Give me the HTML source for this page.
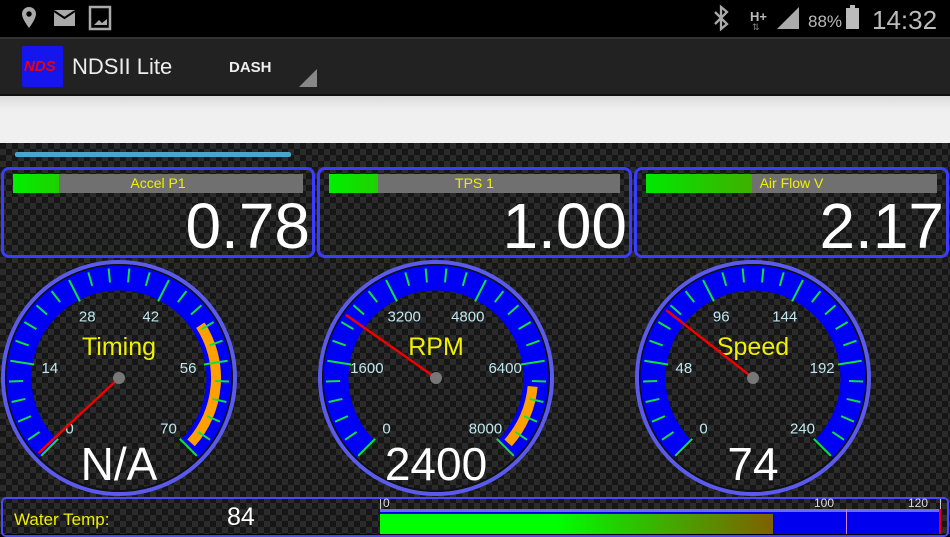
<!DOCTYPE html>
<html><head><meta charset="utf-8"><style>
*{margin:0;padding:0;box-sizing:border-box}
body{width:950px;height:534px;overflow:hidden;background:#000;font-family:"Liberation Sans",sans-serif;position:relative}
.abs{position:absolute}
#content{left:0;top:143px;width:950px;height:391px;background-color:#1c1c1c;
background-image:repeating-conic-gradient(#2b2b2b 0 25%,#161616 0 50%);background-size:12px 12px}
.box{border:3px solid #3c3cff;border-radius:8px;height:91px;top:167px}
.bar{position:absolute;left:9px;right:9px;top:4px;height:19px;background:#707070;color:#f0f000;font-size:14px;text-align:center;line-height:19px}
.bar i{position:absolute;left:0;top:0;bottom:0;background:linear-gradient(90deg,#00f000,#20d000)}
.bar span{position:relative}
.val{position:absolute;right:2px;top:21px;color:#fff;font-size:64px;line-height:70px}
</style></head><body>
<!-- status bar -->
<div class="abs" style="left:0;top:0;width:950px;height:37px;background:#000"></div>
<svg class="abs" style="left:0;top:0" width="950" height="37">
<path d="M29 7a7 7 0 0 1 7 7c0 5-7 14-7 14s-7-9-7-14a7 7 0 0 1 7-7z" fill="#aaa"/><circle cx="29" cy="14" r="2.7" fill="#000"/>
<rect x="54" y="10" width="21" height="16" fill="#aaa"/><path d="M54 11l10.5 7 10.5-7" stroke="#000" stroke-width="2" fill="none"/>
<rect x="90" y="7" width="20" height="22" fill="none" stroke="#aaa" stroke-width="2.5"/><path d="M94 25l5-5 3 3 5-4v6z" fill="#aaa"/>
<path d="M715 12l12 12-6 5V7l6 5-12 12" stroke="#aaa" stroke-width="2.3" fill="none"/>
<text x="750" y="21" fill="#bbb" font-size="13" font-weight="bold">H+</text>
<text x="752" y="30" fill="#888" font-size="9">⇅</text>
<path d="M777 29L799 7v22z" fill="#aaa"/>
<text x="808" y="27" fill="#bbb" font-size="17">88%</text>
<rect x="846" y="8" width="13" height="21" fill="#bbb"/><rect x="850" y="5" width="5" height="3" fill="#bbb"/>
<text x="872" y="29" fill="#bbb" font-size="26">14:32</text>
</svg>
<!-- action bar -->
<div class="abs" style="left:0;top:37px;width:950px;height:59px;background:#222;border-top:2px solid #333;border-bottom:2px solid #111"></div>
<div class="abs" style="left:22px;top:46px;width:41px;height:41px;background:#1515ee;border-radius:2px;color:#e00;font-weight:bold;font-style:italic;font-size:15px;line-height:41px;padding-left:2px">NDS</div>
<div class="abs" style="left:72px;top:54px;color:#eee;font-size:22px">NDSII Lite</div>
<div class="abs" style="left:229px;top:59px;color:#eee;font-size:15px;font-weight:bold">DASH</div>
<svg class="abs" style="left:299px;top:69px" width="18" height="18"><path d="M18 0V18H0z" fill="#888"/></svg>
<div class="abs" style="left:0;top:96px;width:950px;height:47px;background:linear-gradient(#dcdcdc,#f0f0f0 30%,#f0f0f0)"></div>
<div id="content" class="abs"></div>
<div class="abs" style="left:15px;top:152px;width:276px;height:5px;background:#46a6cc;border-radius:2px"></div>
<div class="abs box" style="left:1px;width:314px"><div class="bar"><i style="width:46px"></i><span>Accel P1</span></div><div class="val">0.78</div></div>
<div class="abs box" style="left:317px;width:315px"><div class="bar"><i style="width:49px"></i><span>TPS 1</span></div><div class="val">1.00</div></div>
<div class="abs box" style="left:634px;width:315px"><div class="bar"><i style="width:106px;background:linear-gradient(90deg,#00e800,#40b000)"></i><span>Air Flow V</span></div><div class="val">2.17</div></div>
<svg id="g" class="abs" style="left:0;top:0" width="950" height="534"></svg>
<!-- water temp -->
<div class="abs" style="left:1px;top:497px;width:948px;height:40px;border:2px solid #4848ff;border-radius:5px"></div>
<div class="abs" style="left:14px;top:510px;color:#f0f000;font-size:17px">Water Temp:</div>
<div class="abs" style="left:227px;top:503px;color:#fff;font-size:25px">84</div>
<div class="abs" style="left:380px;top:499px;width:561px;height:35px;border-left:1px solid #ccc;border-right:1px solid #ccc"></div>
<div class="abs" style="left:383px;top:496px;color:#ddd;font-size:12px">0</div>
<div class="abs" style="left:814px;top:496px;color:#ddd;font-size:12px">100</div>
<div class="abs" style="left:908px;top:496px;color:#ddd;font-size:12px">120</div>
<div class="abs" style="left:380px;top:509px;width:561px;height:25px;background:#0000ee;border-top:3px solid #6a6aff"></div>
<div class="abs" style="left:380px;top:514px;width:393px;height:20px;background:linear-gradient(90deg,#00ff00 45%,#22d000 60%,#806000)"></div>
<div class="abs" style="left:846px;top:509px;width:1px;height:25px;background:#d080d0"></div>
<div class="abs" style="left:939px;top:509px;width:2px;height:25px;background:#e00"></div>
<script>
var s='';
function P(cx,cy,r,a){a=a*Math.PI/180;return [cx+r*Math.sin(a),cy-r*Math.cos(a)];}
function arc(cx,cy,r,a0,a1){var p=P(cx,cy,r,a0),q=P(cx,cy,r,a1);return 'M'+p[0]+' '+p[1]+'A'+r+' '+r+' 0 '+((a1-a0)>180?1:0)+' 1 '+q[0]+' '+q[1];}
function gauge(cx,cy,labels,title,val,needle,oa){
 s+='<circle cx="'+cx+'" cy="'+cy+'" r="116" fill="none" stroke="#5a5aee" stroke-width="4"/>';
 s+='<circle cx="'+cx+'" cy="'+cy+'" r="113" fill="none" stroke="#111" stroke-width="2"/>';
 s+='<path d="'+arc(cx,cy,100,-135,135)+'" fill="none" stroke="#0000f5" stroke-width="25"/>';
 if(oa) s+='<path d="'+arc(cx,cy,97,oa[0],oa[1])+'" fill="none" stroke="#ffa000" stroke-width="10"/>';
 for(var i=0;i<=25;i++){var a=-135+i*10.8;var maj=i%5==0;var p=P(cx,cy,maj?86:96,a),q=P(cx,cy,110,a);
  s+='<line x1="'+p[0]+'" y1="'+p[1]+'" x2="'+q[0]+'" y2="'+q[1]+'" stroke="#10e040" stroke-width="2"/>';}
 for(var i=0;i<6;i++){var p=P(cx,cy,70,-135+i*54);
  s+='<text x="'+p[0]+'" y="'+(p[1]+6)+'" fill="#bfe8f0" font-size="15" text-anchor="middle">'+labels[i]+'</text>';}
 s+='<text x="'+cx+'" y="'+(cy-23)+'" fill="#f0f000" font-size="25" text-anchor="middle">'+title+'</text>';
 var n=P(cx,cy,110,needle);
 s+='<line x1="'+cx+'" y1="'+cy+'" x2="'+n[0]+'" y2="'+n[1]+'" stroke="#f00000" stroke-width="2.5"/>';
 s+='<circle cx="'+cx+'" cy="'+cy+'" r="6" fill="#777"/>';
 s+='<text x="'+cx+'" y="'+(cy+102)+'" fill="#fff" font-size="46" text-anchor="middle">'+val+'</text>';
}
gauge(119,378,[0,14,28,42,56,70],'Timing','N/A',-133,[57,132]);
gauge(436,378,[0,1600,3200,4800,6400,8000],'RPM','2400',-55,[95,132]);
gauge(753,378,[0,48,96,144,192,240],'Speed','74',-52,null);
document.getElementById('g').innerHTML=s;
</script>
</body></html>
